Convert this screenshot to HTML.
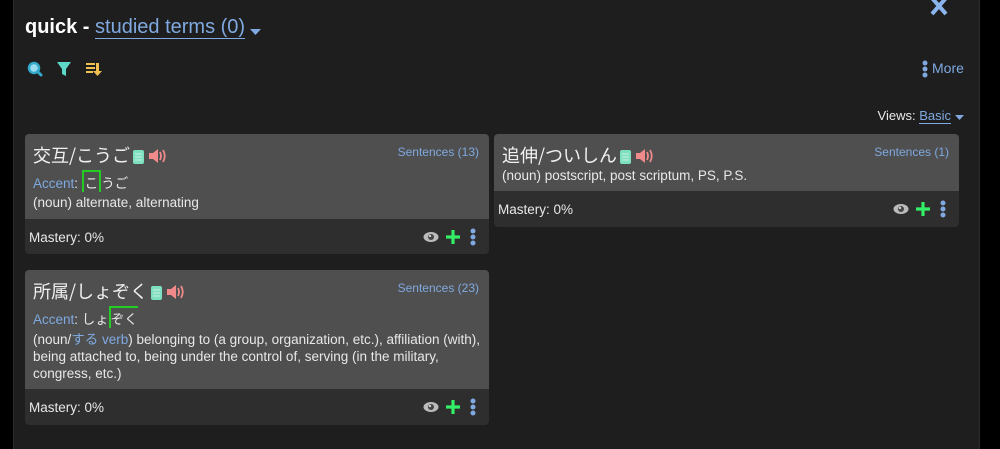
<!DOCTYPE html>
<html><head><meta charset="utf-8"><style>
*{box-sizing:border-box;margin:0;padding:0}
body{width:1000px;height:449px;background:#000;font-family:"Liberation Sans","Noto Sans CJK JP",sans-serif;color:#e8e8e8;position:relative;overflow:hidden}
#panel{position:absolute;left:13px;top:0;width:967px;height:449px;background:#1e1e1e;border-left:1px solid #2c2c2c;border-right:1px solid #2c2c2c}
.abs{position:absolute}
.blue{color:#7fa9e0}
.card{position:absolute;background:#4f4f4f;border-radius:4px 4px 0 0}
.foot{position:absolute;background:#2e2e2e;border-radius:0 0 4px 4px;font-size:13.5px}
.t{position:absolute;left:8px;font-size:18px;color:#f0f0f0;font-family:"Noto Sans CJK JP",sans-serif;white-space:nowrap}
.sen{position:absolute;right:10px;font-size:12px;color:#7fa9e0}
.line{position:absolute;left:8px;font-size:13.5px;white-space:nowrap}
.ic{display:inline-block;vertical-align:-2px;margin-left:3px}
.icons{position:absolute;right:10px;top:9px;display:flex;gap:6px;align-items:center}
</style></head><body>
<div id="panel">
<div class="abs" style="left:11px;top:16px;font-size:20px;font-weight:bold;color:#fff">quick - <span style="font-weight:normal;color:#7fa9e0;border-bottom:1px solid #7fa9e0">studied terms (0)</span></div>
<svg class="abs" style="left:236px;top:29px" width="12" height="8"><path d="M0 0H11L5.5 6Z" fill="#7fa9e0"/></svg>
<svg class="abs" style="left:11px;top:60px" width="90" height="18">
<circle cx="9" cy="8" r="5" fill="#9de" stroke="#3ac" stroke-width="2.5"/><line x1="12.5" y1="11.5" x2="16" y2="15" stroke="#3ac" stroke-width="3" stroke-linecap="round"/>
<path d="M32 2 H46 L41 9 V16 L37 14 V9 Z" fill="#5ed8c8"/>
<g fill="#f0c050"><rect x="61" y="3" width="9" height="2"/><rect x="61" y="7" width="9" height="2"/><rect x="61" y="11" width="7" height="2"/><path d="M71 3 h3 v8 h3 l-4.5 5 l-4.5 -5 h3z"/></g>
</svg>
<svg class="abs" style="left:907px;top:60px" width="8" height="18"><circle cx="4" cy="3" r="2.5" fill="#7fa9e0"/><circle cx="4" cy="9" r="2.5" fill="#7fa9e0"/><circle cx="4" cy="15" r="2.5" fill="#7fa9e0"/></svg>
<div class="abs blue" style="left:918px;top:60px;font-size:14px">More</div>
<svg class="abs" style="left:916px;top:0px" width="18" height="16"><path d="M2 -2L16 14M16 -2L2 14" stroke="#8ab4ee" stroke-width="4"/></svg>
<div class="abs" style="right:28px;top:108px;font-size:13px">Views: <span class="blue" style="border-bottom:1px solid #7fa9e0">Basic</span></div>
<svg class="abs" style="left:941px;top:115px" width="10" height="6"><path d="M0 0H9L4.5 5Z" fill="#7fa9e0"/></svg>

<div class="card" style="left:11px;top:134px;width:464px;height:85px">
<div class="t" style="top:8px">交互/こうご<svg class="ic" width="12" height="14"><rect x="0" y="0" width="11" height="14" rx="2" fill="#7de0c0"/><path d="M2 4H9M2 7H9M2 10H9" stroke="#cfeee4" stroke-width="1"/></svg><svg class="ic" width="20" height="16"><path d="M1 5H5L10 1V15L5 11H1Z" fill="#f08a8a"/><path d="M12 4Q14 8 12 12M15 2Q18.5 8 15 14" stroke="#f08a8a" stroke-width="1.8" fill="none"/></svg></div>
<div class="sen" style="top:11px">Sentences (13)</div>
<div class="line" style="top:38px"><span class="blue">Accent</span>: <span style="font-family:'Noto Sans CJK JP';border:2px solid #2c2;border-bottom:none;padding:0 1px">こ</span>うご</div>
<div class="line" style="top:61px">(noun) alternate, alternating</div>
</div>
<div class="foot" style="left:11px;top:219px;width:464px;height:35px"><span class="abs" style="left:4px;top:11px">Mastery: 0%</span>
<div class="icons"><svg width="16" height="12"><ellipse cx="8" cy="6" rx="7.5" ry="5" fill="#bbb"/><circle cx="8" cy="6" r="3" fill="#444"/><circle cx="7" cy="5" r="1.2" fill="#ccc"/></svg><svg width="16" height="16"><path d="M8 1V15M1 8H15" stroke="#3e6" stroke-width="3.2"/></svg><svg width="12" height="18"><circle cx="6" cy="3" r="2.5" fill="#7fa9e0"/><circle cx="6" cy="9" r="2.5" fill="#7fa9e0"/><circle cx="6" cy="15" r="2.5" fill="#7fa9e0"/></svg></div></div>

<div class="card" style="left:480px;top:134px;width:465px;height:57px">
<div class="t" style="top:8px">追伸/ついしん<svg class="ic" width="12" height="14"><rect x="0" y="0" width="11" height="14" rx="2" fill="#7de0c0"/><path d="M2 4H9M2 7H9M2 10H9" stroke="#cfeee4" stroke-width="1"/></svg><svg class="ic" width="20" height="16"><path d="M1 5H5L10 1V15L5 11H1Z" fill="#f08a8a"/><path d="M12 4Q14 8 12 12M15 2Q18.5 8 15 14" stroke="#f08a8a" stroke-width="1.8" fill="none"/></svg></div>
<div class="sen" style="top:11px">Sentences (1)</div>
<div class="line" style="top:34px">(noun) postscript, post scriptum, PS, P.S.</div>
</div>
<div class="foot" style="left:480px;top:191px;width:465px;height:36px"><span class="abs" style="left:4px;top:11px">Mastery: 0%</span>
<div class="icons"><svg width="16" height="12"><ellipse cx="8" cy="6" rx="7.5" ry="5" fill="#bbb"/><circle cx="8" cy="6" r="3" fill="#444"/><circle cx="7" cy="5" r="1.2" fill="#ccc"/></svg><svg width="16" height="16"><path d="M8 1V15M1 8H15" stroke="#3e6" stroke-width="3.2"/></svg><svg width="12" height="18"><circle cx="6" cy="3" r="2.5" fill="#7fa9e0"/><circle cx="6" cy="9" r="2.5" fill="#7fa9e0"/><circle cx="6" cy="15" r="2.5" fill="#7fa9e0"/></svg></div></div>

<div class="card" style="left:11px;top:270px;width:464px;height:119px">
<div class="t" style="top:8px">所属/しょぞく<svg class="ic" width="12" height="14"><rect x="0" y="0" width="11" height="14" rx="2" fill="#7de0c0"/><path d="M2 4H9M2 7H9M2 10H9" stroke="#cfeee4" stroke-width="1"/></svg><svg class="ic" width="20" height="16"><path d="M1 5H5L10 1V15L5 11H1Z" fill="#f08a8a"/><path d="M12 4Q14 8 12 12M15 2Q18.5 8 15 14" stroke="#f08a8a" stroke-width="1.8" fill="none"/></svg></div>
<div class="sen" style="top:11px">Sentences (23)</div>
<div class="line" style="top:38px"><span class="blue">Accent</span>: しょ<span style="font-family:'Noto Sans CJK JP';border-top:2px solid #2c2;border-left:2px solid #2c2">ぞく</span></div>
<div class="line" style="top:61px;white-space:normal;width:455px;line-height:17px">(noun/<span class="blue">する verb</span>) belonging to (a group, organization, etc.), affiliation (with), being attached to, being under the control of, serving (in the military, congress, etc.)</div>
</div>
<div class="foot" style="left:11px;top:389px;width:464px;height:36px"><span class="abs" style="left:4px;top:11px">Mastery: 0%</span>
<div class="icons"><svg width="16" height="12"><ellipse cx="8" cy="6" rx="7.5" ry="5" fill="#bbb"/><circle cx="8" cy="6" r="3" fill="#444"/><circle cx="7" cy="5" r="1.2" fill="#ccc"/></svg><svg width="16" height="16"><path d="M8 1V15M1 8H15" stroke="#3e6" stroke-width="3.2"/></svg><svg width="12" height="18"><circle cx="6" cy="3" r="2.5" fill="#7fa9e0"/><circle cx="6" cy="9" r="2.5" fill="#7fa9e0"/><circle cx="6" cy="15" r="2.5" fill="#7fa9e0"/></svg></div></div>
</div>
</body></html>
